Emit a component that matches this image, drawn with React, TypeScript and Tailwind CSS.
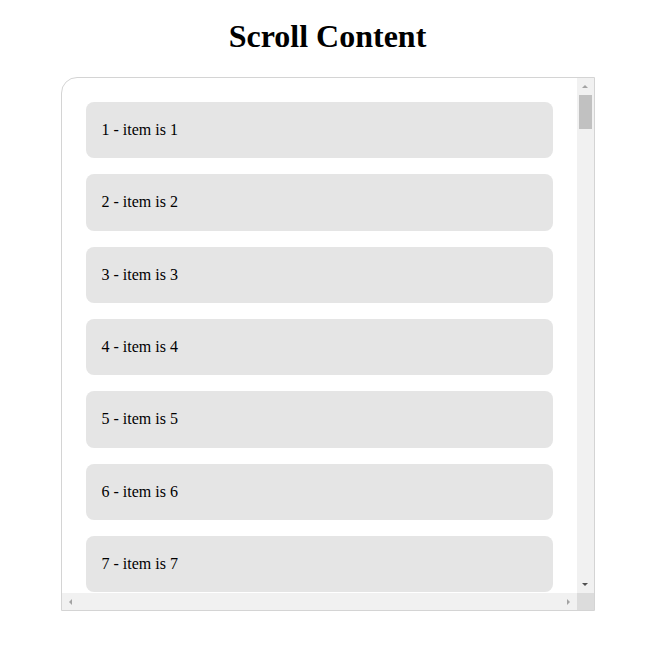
import React from 'react';

const items = Array.from({ length: 100 }, (_, i) => i + 1);

// small scrollbar arrow triangle
function Arrow({ dir, dark }: { dir: 'up' | 'down' | 'left' | 'right'; dark?: boolean }) {
  const points = {
    up: '0,3 6,3 3,0',
    down: '0,0 6,0 3,3',
    left: '3,0 3,6 0,3',
    right: '0,0 0,6 3,3',
  }[dir];
  const vertical = dir === 'up' || dir === 'down';
  return (
    <svg width={vertical ? 6 : 3} height={vertical ? 3 : 6} viewBox={vertical ? '0 0 6 3' : '0 0 3 6'}>
      <polygon points={points} fill={dark ? '#505050' : '#a3a3a3'} />
    </svg>
  );
}

export default function App() {
  return (
    <div className="min-h-screen bg-white text-black" style={{ fontFamily: '"Liberation Serif", "Times New Roman", serif' }}>
      {/* Header */}
      <h1 className="pt-3 mb-[17px] text-center text-[32px] leading-[48px] font-bold">Scroll Content</h1>

      {/* Scroll box with drawn scrollbars */}
      <div className="mx-auto w-[534px] h-[534px] rounded-tl-2xl border border-[#d4d4d4] overflow-hidden grid grid-cols-[1fr_17px] grid-rows-[1fr_17px]">
        <div className="overflow-hidden">
          <div className="flex flex-col gap-4 p-6">
            {items.map((n) => (
              <div key={n} className="rounded-lg bg-[#e5e5e5] px-4 py-4 text-base leading-[24.33px]">
                {n} - item is {n}
              </div>
            ))}
          </div>
        </div>

        {/* Vertical scrollbar */}
        <div className="flex flex-col bg-[#f1f1f1]">
          <div className="h-[17px] flex items-center justify-center">
            <Arrow dir="up" />
          </div>
          <div className="flex-1 px-[2px]">
            <div className="h-[34px] bg-[#c1c1c1]" />
          </div>
          <div className="h-[17px] flex items-center justify-center">
            <Arrow dir="down" dark />
          </div>
        </div>

        {/* Horizontal scrollbar */}
        <div className="flex bg-[#f1f1f1]">
          <div className="w-[17px] flex items-center justify-center">
            <Arrow dir="left" />
          </div>
          <div className="flex-1" />
          <div className="w-[17px] flex items-center justify-center">
            <Arrow dir="right" />
          </div>
        </div>

        {/* Corner */}
        <div className="bg-[#dcdcdc]" />
      </div>
    </div>
  );
}
